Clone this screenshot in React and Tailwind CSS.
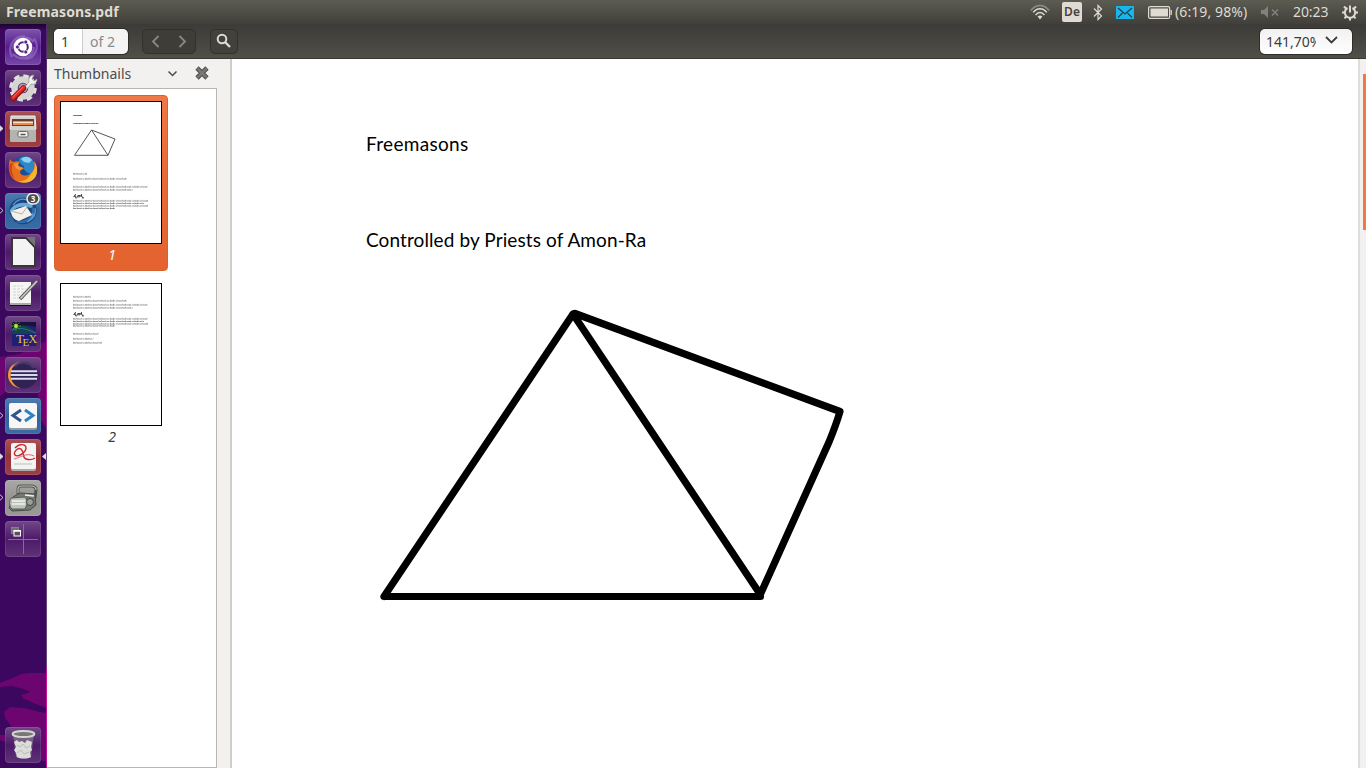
import React from "react";

const Svg = ({ w = 36, h = 36, className = "", children }) => (
  <svg width={w} height={h} viewBox={`0 0 ${w} ${h}`} className={`block shrink-0 ${className}`} fill="none">
    {children}
  </svg>
);

const tile = {
  plain: "bg-[#4d1b69] from-white/20 via-white/0 to-white/10",
  dash: "bg-[#551c90] from-white/25 via-white/0 to-white/20",
  red: "bg-[#96343a] from-white/15 via-white/0 to-white/5",
  blue: "bg-[#30649f] from-white/15 via-white/0 to-white/5",
  gray: "bg-[#969392] from-white/20 via-white/0 to-white/5",
};

function Tile({ kind = "plain", mark, active, children }) {
  return (
    <div className="relative h-9 w-9 shrink-0">
      <div className={`h-9 w-9 overflow-hidden rounded-[4px] bg-gradient-to-b ring-1 ring-inset ring-white/10 ${tile[kind]}`}>
        <Svg>{children}</Svg>
      </div>
      {mark && (
        <svg className="absolute -left-[5px] top-[14px]" width="4" height="7" viewBox="0 0 4 7">
          <path d="M0 .7 3 3.5 0 6.3" fill={mark === "full" ? "#ddd" : "none"} stroke="#ddd" strokeWidth=".9" />
        </svg>
      )}
      {active && (
        <svg className="absolute -right-[5px] top-[14px]" width="4" height="7" viewBox="0 0 4 7">
          <path d="M4 0 0 3.5 4 7z" fill="#ddd" />
        </svg>
      )}
    </div>
  );
}

function Launcher() {
  return (
    <nav className="relative flex w-[47px] shrink-0 flex-col items-start gap-[5px] overflow-hidden bg-[#3c075f] pb-[5px] pl-[5px] pt-[5px]">
      <svg className="absolute left-0 top-0" width="47" height="744" viewBox="0 24 47 744">
        <defs>
          <linearGradient id="lt" x1="0" y1="0" x2="0" y2="1">
            <stop offset="0" stopColor="#1b0330" />
            <stop offset="1" stopColor="#3c075f" />
          </linearGradient>
          <linearGradient id="le" x1="0" y1="0" x2="0" y2="1">
            <stop offset="0" stopColor="#4d2a68" />
            <stop offset=".34" stopColor="#7b5c8e" />
            <stop offset=".4" stopColor="#b02c9c" />
            <stop offset=".52" stopColor="#c0209c" />
            <stop offset=".55" stopColor="#6b4a80" />
            <stop offset=".86" stopColor="#66447c" />
            <stop offset=".87" stopColor="#d0109c" />
            <stop offset="1" stopColor="#c0109c" />
          </linearGradient>
        </defs>
        <rect y="24" width="47" height="6" fill="url(#lt)" />
        <path d="M47 341 36 345 20 354 0 357V396L12 386 20 380 37 388 41 420 47 430z" fill="#6d0571" />
        <path d="M0 683 10 679 22 674 30 673H47V708L36 704 24 699 21 695 31 692 23 689 12 686 0 687z" fill="#6d0571" />
        <path d="M4 712 10 707 24 708 40 712 47 713V762L30 757 20 748 0 740V735H18L5 718z" fill="#6d0571" />
        <rect x="46" y="24" width="1" height="744" fill="url(#le)" />
      </svg>
      <Tile kind="dash">
        <path d="M7 28C2 18 8 7 20 7M29 9c6 9 2 20-9 21M8 20C9 9 22 5 29 13M29 18c-1 11-13 15-21 7" stroke="#b58fd3" strokeWidth="2.2" opacity=".45" />
        <circle cx="18" cy="18" r="9.3" fill="#fff" />
        <circle cx="18" cy="18" r="4.8" stroke="#55207f" strokeWidth="2" />
        <g fill="#55207f" stroke="#fff" strokeWidth=".8">
          <circle cx="12.4" cy="18" r="2" />
          <circle cx="20.800" cy="13" r="2" />
          <circle cx="20.800" cy="23" r="2" />
        </g>
      </Tile>
      <Tile>
        <circle cx="18" cy="18" r="8.500" stroke="#d4d4d2" strokeWidth="6.500" />
        <circle cx="18" cy="18" r="12.300" stroke="#dededc" strokeWidth="3" strokeDasharray="5.600 4.060" />
        <circle cx="18" cy="18" r="4.500" fill="#a79ca9" />
        <path d="m20 17 4-5c-1-4 1-7 5-7l-2 4 2 2 3-2c0 4-3 6-6 5l-5 6z" fill="#f2f2f0" stroke="#8e8e8c" strokeWidth=".7" />
        <path d="M8 28.500 18.500 18" stroke="#8c0f10" strokeWidth="5.500" strokeLinecap="round" />
        <path d="M8 28 18.500 17.500" stroke="#d9302a" strokeWidth="3.800" strokeLinecap="round" />
        <path d="m8 27 10-10" stroke="#ee8078" strokeWidth=".8" />
      </Tile>
      <Tile kind="red" mark="full">
        <path d="M6 5h24l1 13H5z" fill="#d0d0cd" stroke="#ededeb" />
        <rect x="5" y="17" width="26" height="14" rx="1" fill="#b3b3af" />
        <path d="M5 18h26" stroke="#f0f0ee" />
        <rect x="7" y="8" width="22" height="7" fill="#693d2d" />
        <path d="M8 10h20v4H8z" fill="#f18a45" />
        <path d="M8 11.500h20" stroke="#fbe4c9" />
        <rect x="13" y="20.500" width="10" height="5.500" rx="1.500" fill="#f3f3f1" stroke="#666" />
        <path d="M15.500 23.500h5" stroke="#555" strokeWidth="1.600" />
      </Tile>
      <Tile>
        <circle cx="19" cy="16.500" r="12.500" fill="#1c4f96" />
        <path d="M14 7c4-4 12-3 15 3 3 5 2 10-1 12-6 0-10-4-9-8-3-1-5-4-5-7z" fill="#2f86c8" />
        <path d="M16 7c3-3 8-3 11 1l-3 3-5-1z" fill="#8dd2ee" />
        <path d="M5 7c1 2 2 3 4 3 2-1 4-1 6 0-2 2-2 3-1 4l5 2c-1 2-4 2-4 4 0 4 7 5 11 1 3-3 4-7 3-12 5 7 4 16-3 20-8 4-18 1-21-7-2-6-1-10 0-15z" fill="#e66e1e" />
        <path d="M26 22c4-4 5-9 3-13 5 7 4 16-3 20-4 2-9 2-13 0 6 1 10-2 13-7z" fill="#f6b62c" />
        <path d="M5 12c-2 6 1 12 5 15-4-7-4-11-2-16z" fill="#cd4018" />
        <path d="M9 12c2-1 4-1 5-1-2 2-1 3 0 4l4 1-3 2c-3 0-5-3-6-6z" fill="#f29a3a" />
      </Tile>
      <Tile kind="blue" mark="open">
        <path d="M5 21C2 10 12 3 22 5c9 2 12 12 8 19-4 8-13 9-20 5z" fill="#1b4680" />
        <path d="M26 12c6 5 4 14-4 17-5 2-9 1-12 0l9-2c8-3 9-9 7-15z" fill="#2d6dad" />
        <path d="M5 17c3-5 9-8 15-7 3 0 5-2 4-4 4 3 5 7 2 9-8-3-14-2-21 5z" fill="#6aa8d8" />
        <path d="M8 12c3-5 9-7 14-5M24 28c5-3 7-8 6-13M22 29c4-2 6-5 6-9" stroke="#5d9bd0" strokeWidth="1.300" />
        <path d="m6 18 15-5 6 9-13 6c-5-1-8-5-8-10z" fill="#f4f1eb" />
        <path d="m6 18 11 3 5-7" stroke="#b9b0a6" />
        <rect x="22" y=".5" width="12" height="10.500" rx="5.250" fill="#4c4c4c" stroke="#eee" strokeWidth="1.500" />
        <text x="28" y="8.500" textAnchor="middle" className="text-[8px] font-bold" fontFamily="Noto Sans" fill="#fff">3</text>
      </Tile>
      <Tile>
        <path d="M7 4h15l8 9v19H7z" fill="#f3f3f3" stroke="#363636" strokeWidth="2" />
        <path d="M21 3h9v10z" fill="#77727a" />
        <path d="m20.500 3.500 9.500 10" stroke="#363636" strokeWidth="1.800" />
      </Tile>
      <Tile>
        <rect x="5" y="7" width="21" height="22" fill="#f5f5f4" />
        <path d="M5 29.500h21" stroke="#aaa" strokeWidth="3" />
        <path d="M5 30.500h21" stroke="#111" />
        <path d="M8 11h10M8 14h13M8 17h12M8 20h9M8 23h11" stroke="#d2d2de" strokeDasharray="3 1" />
        <path d="M15 24 32 6" stroke="#555" strokeWidth="3.300" />
        <path d="M15.500 23.500 32 6" stroke="#c8c8c8" strokeWidth="1.800" />
      </Tile>
      <Tile>
        <rect x="7" y="6" width="24" height="24" fill="#201f78" />
        <path d="M7 12c8-6 16-2 24 4v2H7z" fill="#14424f" />
        <path d="M7 6h24v5c-8-2-16-3-24 2z" fill="#151538" />
        <path d="M7 14c8-4 16 0 24 3" stroke="#24708a" />
        <path d="M11 5v10M6 10h10M7.500 6.500l7 7M14.500 6.500l-7 7" stroke="#4e9b2a" strokeWidth=".8" />
        <circle cx="11" cy="10" r="1.900" fill="#c9e637" />
        <g fill="#eac233" fontFamily="Liberation Serif">
          <text x="11" y="27" className="text-[13px]">T</text>
          <text x="17.500" y="30" className="text-[11px]">E</text>
          <text x="23.500" y="27" className="text-[12px]">X</text>
        </g>
      </Tile>
      <Tile>
        <circle cx="16" cy="18" r="13" fill="#f49a30" />
        <circle cx="19" cy="18" r="13.500" fill="#302354" />
        <path d="M9 9c7-6 16-4 20 2" stroke="#625081" strokeWidth="3" opacity=".5" />
        <path d="M6 14.300h26M5.500 18h27M6 21.700h26" stroke="#d9d8ec" strokeWidth="1.900" />
      </Tile>
      <Tile kind="blue" mark="open">
        <rect x="4" y="6" width="28" height="26" rx="2" fill="#999" />
        <rect x="4" y="5" width="28" height="25" rx="2" fill="#f7f7f7" />
        <path d="m16 12-8 5.500 8 5.500" stroke="#33538b" strokeWidth="3" />
        <path d="m20 12 8 5.500-8 5.500" stroke="#2e80c3" strokeWidth="3" />
      </Tile>
      <Tile kind="red" mark="full" active>
        <rect x="6" y="5" width="25" height="27" rx="2" fill="#aaa" />
        <rect x="6" y="4" width="25" height="26" rx="2" fill="#f3f3f2" />
        <path d="M9 25h18" stroke="#cfcfcf" strokeWidth="1.500" />
        <path d="M10 9c3-4 11-5 11 0 0 4-8 10-11 7-2-3 3-8 6-6 4 4 1 9 5 10 3 1 6 1 9-1" stroke="#d4212a" strokeWidth="1.400" />
        <path d="M9 20c6-1 12-7 20-3" stroke="#e2686c" strokeWidth="1" />
      </Tile>
      <Tile kind="gray" mark="open">
        <path d="M13 14V9c0-3 1-3 4-3h9c3 0 5 1 5 4l-1 8" stroke="#51564f" strokeWidth="3" />
        <path d="M13 13V9c0-2 1-3 4-3h9c3 0 5 1 5 4" stroke="#b9bdb6" strokeWidth="1.200" />
        <path d="m8 17 7-4 15 1 1 11-6 5-18 1-3-3z" fill="#747a70" stroke="#484d45" />
        <path d="m6 18 14-1 3 5-3 7H7c-3-3-3-8-1-11z" fill="#bfc4ba" stroke="#585d55" />
        <path d="M7 21h13M7 24h13M20 15l9 1" stroke="#f0f2ec" strokeWidth="1.500" />
        <circle cx="25" cy="22" r="3.500" fill="#9b9f97" stroke="#444" />
      </Tile>
      <Tile>
        <path d="M18.500 3v30M3 18.500h30" stroke="#866b94" />
        <rect x="6.500" y="6.500" width="7" height="6" fill="#746d76" stroke="#8f8795" strokeWidth=".8" />
        <rect x="9" y="9.500" width="6.500" height="5.500" fill="#5b5061" stroke="#fff" />
        <path d="M8.500 10h7.500" stroke="#fff" strokeWidth="1.600" />
      </Tile>
      <div className="mt-auto">
        <Tile>
          <path d="m8 7 3 23c4 2 11 2 15 0l3-23z" fill="#8b8a8b" opacity=".6" />
          <path d="m9 15 3-2 2 2 3-1 3 2 2-3 5 2-1 5 1 3-2 2 1 5c-4 2-10 2-14 0l-1-4-2-3 2-3z" fill="#dcdcda" />
          <path d="m12 18 3 2 3-3 3 4 4-2M12 26l4-3 3 4 5-2" stroke="#bbb" />
          <ellipse cx="18.500" cy="7" rx="11" ry="3" fill="#777" stroke="#d6d6d4" strokeWidth="1.800" />
        </Tile>
      </div>
    </nav>
  );
}

function TopPanel() {
  return (
    <header className="flex h-6 shrink-0 items-center bg-gradient-to-b from-[#5d5c52] to-[#403f3a] font-['Noto_Sans','Open_Sans',sans-serif] text-[#dfdbd2]">
      <h1 className="ml-[6px] text-[14px] font-bold leading-6 tracking-[0.1px]">Freemasons.pdf</h1>
      <div className="ml-auto flex h-6 items-center">
        <Svg w={20} h={16} className="mr-[12px]">
          <path d="M.8 6.500C6-.1 14-.1 19.200 6.500" stroke="#908d86" strokeWidth="1.400" />
          <path d="M3.200 8.400c4-5 9.600-5 13.600 0M5.600 11c2.700-3.500 6.100-3.500 8.800 0" stroke="#dfdbd2" strokeWidth="1.500" />
          <path d="m10 15.500-2.400-3c1.300-1.300 3.500-1.300 4.800 0z" fill="#dfdbd2" />
        </Svg>
        <div className="mr-[11px] flex h-5 w-5 items-center justify-center rounded-[2px] bg-[#dfdbd2] text-[12px] font-semibold text-[#45433f]">De</div>
        <Svg w={10} h={17} className="mr-[13px]">
          <path d="m1 4.500 7.500 7.500L5 15.500v-14L8.500 5 1 12.500" stroke="#dfdbd2" strokeWidth="1.200" />
        </Svg>
        <Svg w={18} h={13} className="mr-[14px]">
          <rect width="18" height="13" fill="#19b6ee" />
          <path d="m2 2 7 6 7-6M2 11.500 6.500 7M16 11.500 11.500 7" stroke="#2f3e43" strokeWidth="1.200" />
        </Svg>
        <Svg w={24} h={13} className="mr-[3px]">
          <rect x=".6" y=".6" width="21" height="11.800" rx="1.500" stroke="#dfdbd2" strokeWidth="1.200" />
          <rect x="2.500" y="2.500" width="17.500" height="8" fill="#dfdbd2" />
          <path d="M23.200 4v5" stroke="#dfdbd2" strokeWidth="1.300" />
        </Svg>
        <span className="w-[74px] whitespace-nowrap text-[14px] leading-6 tracking-[0.1px]">(6:19, 98%)</span>
        <Svg w={18} h={12} className="ml-[12px] mr-[14px]">
          <path d="M0 4h3l4-4v12L3 8H0z" fill="#83817b" />
          <path d="m11 3.500 6 6m0-6-6 6" stroke="#83817b" strokeWidth="1.600" />
        </Svg>
        <span className="w-[37px] whitespace-nowrap text-[14px] leading-6 tracking-[-0.100px]">20:23</span>
        <Svg w={16} h={17} className="ml-[12px] mr-[8px]">
          <path d="M8 1.500v7" stroke="#dfdbd2" strokeWidth="2" />
          <path d="M5.500 4a5.200 5.200 0 1 0 5 0" stroke="#dfdbd2" strokeWidth="2" />
          <path d="m4 4.500-2-2M12 4.500l2-2M3 8.500H0M16 8.500h-3M4.500 12l-2 2.300M11.500 12l2 2.300M8 13.500v3" stroke="#dfdbd2" strokeWidth="2" />
        </Svg>
      </div>
    </header>
  );
}

function Toolbar() {
  return (
    <div className="flex h-[35px] shrink-0 items-start border-b border-[#3a3934] bg-gradient-to-b from-[#3c3b37] to-[#504f48] pl-[7px] pt-[5px] font-['Noto_Sans','Open_Sans',sans-serif]">
      <div className="flex h-[25px] w-[74px] overflow-hidden rounded-[5px] bg-[#f4f4f4] text-[14px] leading-[25px] ring-1 ring-[#2e2d2a]">
        <div className="w-[29px] border-r border-[#ccc] bg-white pl-[7px] text-[#3c3c3c]">1</div>
        <div className="pl-[7px] text-[#8a8a8a]">of 2</div>
      </div>
      <div className="ml-[14px] flex h-[25px] w-[54px] items-center justify-between rounded-[5px] border border-[#32312d] bg-[#3e3d38] px-[8px]">
        <Svg w={9} h={13}><path d="M7.500 1 2 6.500 7.500 12" stroke="#8a8881" strokeWidth="1.800" /></Svg>
        <Svg w={9} h={13}><path d="M1.500 1 7 6.500 1.500 12" stroke="#8a8881" strokeWidth="1.800" /></Svg>
      </div>
      <div className="ml-[14px] flex h-[25px] w-[28px] items-center justify-center rounded-[5px] border border-[#32312d] bg-[#42413c]">
        <Svg w={15} h={15} className="-mt-[2px] -ml-[1px]">
          <circle cx="6" cy="6" r="4.300" stroke="#dfdbd2" strokeWidth="2" />
          <path d="m9 9 5 5" stroke="#dfdbd2" strokeWidth="2.400" />
        </Svg>
      </div>
      <div className="ml-auto mr-[14px] flex h-[25px] w-[92px] items-center rounded-[5px] bg-gradient-to-b from-[#f1f1f1] to-white pl-[6px] ring-1 ring-[#2e2d2a]">
        <span className="w-[50px] overflow-hidden whitespace-nowrap text-[14px] leading-[25px] text-[#3c3c3c]">141,70%</span>
        <Svg w={13} h={9} className="ml-[9px] -mt-[2px]"><path d="m1 1 5.500 5.500L12 1" stroke="#3c3c3c" strokeWidth="1.800" /></Svg>
      </div>
    </div>
  );
}

const pageOne = [
  [173.500, 14], [178.500, 54], [186.500, 74], [189.500, 60],
  [200.500, 75], [203, 71], [205.500, 75], [208, 42],
];
const pageTwo = [
  [296.500, 18], [300.500, 54], [304.500, 74], [307.500, 60],
  [318.500, 74], [321, 71], [323.500, 75], [325.500, 42],
  [333.500, 25], [338.500, 20], [342.500, 29],
];

function Lines({ rows, top }) {
  return rows.map(([y, w], i) => (
    <g key={i}>
      <path d={`M12 ${y - top + 0.5}h${w}`} stroke="#333" strokeWidth=".9" strokeDasharray="3 .6 5 .8 2 .5 4 .7" opacity=".55" />
      <path d={`M12.500 ${y - top}h${w}`} stroke="#222" strokeWidth="1.400" strokeDasharray=".7 2.300 .8 3.700 .5 4.200" opacity=".4" />
    </g>
  ));
}

function Equation({ y }) {
  return (
    <path
      d={`M12.500 ${y + 1}q1.500-3 2 0t2-1M14.500 ${y - 2}l-1 3M16.500 ${y - 0.5}h2.500M16.500 ${y + 0.8}h2.500M19 ${y + 0.5}q1.500-3 2 0t2 1M20.500 ${y - 2}l-.5 3`}
      stroke="#333"
      strokeWidth=".9"
    />
  );
}

function Sidebar() {
  return (
    <aside className="flex w-[185px] shrink-0 flex-col border-r-2 border-[#cfcdca] bg-[#f2f1f0] font-['Noto_Sans','Open_Sans',sans-serif]">
      <div className="flex h-[29px] w-[170px] items-center pl-[7px] text-[14px] text-[#4c4c4c]">
        <span className="w-[80px] leading-[29px]">Thumbnails</span>
        <Svg w={11} h={8} className="ml-[33px]"><path d="m1.500 1.500 4 4 4-4" stroke="#4c4c4c" strokeWidth="1.500" /></Svg>
        <Svg w={14} h={14} className="-mt-[2px] ml-[17px]">
          <path d="m2 2 10 10M12 2 2 12" stroke="#505050" strokeWidth="4.600" />
          <path d="m2.500 2.500 9 9M11.500 2.500l-9 9" stroke="#777" strokeWidth="2.500" />
        </Svg>
      </div>
      <div className="flex w-[170px] grow flex-col border border-l-0 border-[#bab5b0] bg-white pl-[7px] pt-[6px]">
        <div className="flex h-[176px] w-[114px] flex-col items-center rounded-[4px] border border-[#d9602f] bg-gradient-to-b from-[#f07746] via-[#e66a37] to-[#e4632f] pt-[5px]">
          <div className="h-[143px] w-[102px] border border-black bg-white">
            <Svg w={100} h={141}>
              <text x="12" y="14" textLength="9" className="text-[2.200px]" fontFamily="Lato" fontWeight="bold" fill="#000">Freemasons</text>
              <text x="12" y="22" textLength="25" className="text-[2.200px]" fontFamily="Lato" fontWeight="bold" fill="#000">Controlled by Priests of Amon-Ra</text>
              <path d="M13.500 53.300 30.500 28 47 53.300zM30.500 28 54 37 47 53.300" stroke="#555" strokeWidth="1" strokeLinejoin="round" />
              <Lines rows={pageOne} top={102} />
              <Equation y={94} />
            </Svg>
          </div>
          <span className="ml-[2px] text-[14px] italic leading-[22px] text-white">1</span>
        </div>
        <div className="mt-[12px] flex w-[114px] flex-col items-center">
          <div className="h-[143px] w-[102px] border border-black bg-white">
            <Svg w={100} h={141}>
              <Lines rows={pageTwo} top={284} />
              <Equation y={30} />
            </Svg>
          </div>
          <span className="ml-[2px] text-[14px] italic leading-[22px] text-[#3c3c3c]">2</span>
        </div>
      </div>
    </aside>
  );
}

function Document() {
  return (
    <main className="flex grow flex-col bg-white pl-[134px] pt-[73px] font-['Lato','Open_Sans',sans-serif] text-[19px] text-black">
      <p className="h-6 leading-6 tracking-[0.300px]">Freemasons</p>
      <p className="mt-[72px] h-6 leading-6 tracking-[0.100px]">Controlled by Priests of Amon-Ra</p>
      <svg className="mt-[48px] block" width="490" height="310" viewBox="366 300 490 310" fill="none">
        <path d="M384 596.500 573 314M384 596.500H760.500M573 314 760 594M575 313.500 840 411.500Q836 425 829 442L760.500 594" stroke="#000" strokeWidth="7.200" strokeLinejoin="round" strokeLinecap="round" />
      </svg>
    </main>
  );
}

export default function App() {
  return (
    <div className="flex h-[768px] w-[1366px] flex-col overflow-hidden bg-white">
      <TopPanel />
      <div className="flex min-h-0 grow">
        <Launcher />
        <div className="flex min-w-0 grow flex-col">
          <Toolbar />
          <div className="flex min-h-0 grow">
            <Sidebar />
            <Document />
            <div className="flex w-2 shrink-0 flex-col items-end border-l-2 border-[#dfdddb] bg-[#f2f1f0] pt-[15px]">
              <div className="h-[156px] w-[3px] bg-[#f07746]" />
            </div>
          </div>
        </div>
      </div>
    </div>
  );
}
